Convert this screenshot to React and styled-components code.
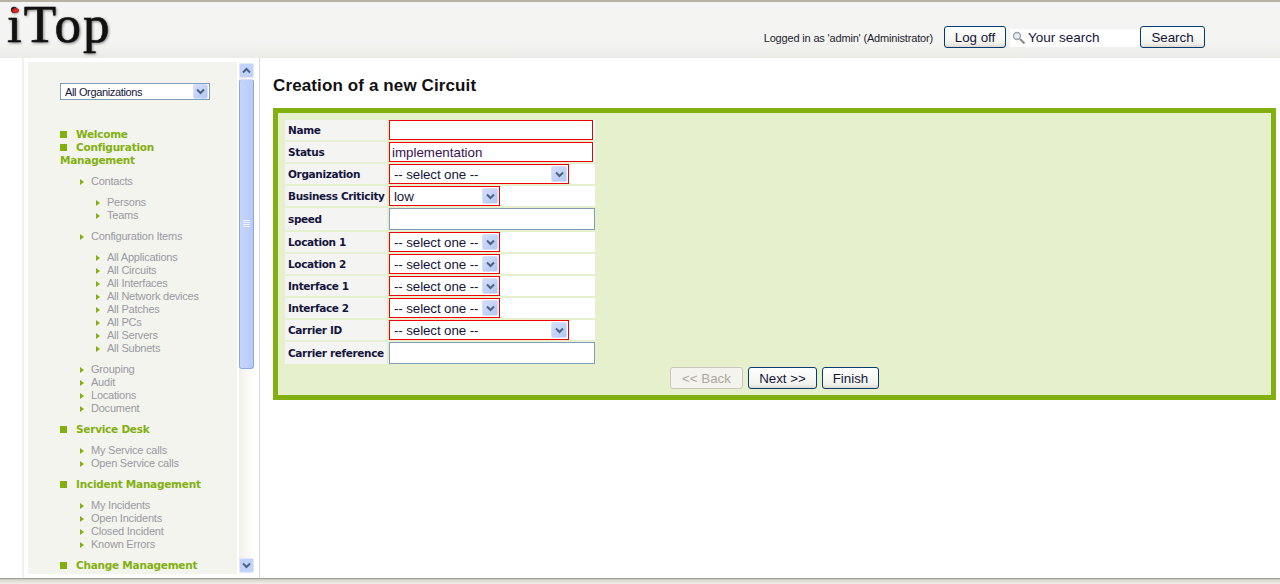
import React from "react";
import styled, { createGlobalStyle } from "styled-components";

const GlobalStyle = createGlobalStyle`
  html, body {
    margin: 0;
    padding: 0;
    background: #fff;
    overflow: hidden;
  }
  * {
    box-sizing: border-box;
  }
`;

const green = "#83b011";

const Page = styled.div`
  width: 1280px;
  height: 584px;
  display: flex;
  flex-direction: column;
  overflow: hidden;
  font-family: "Liberation Sans", Arial, sans-serif;
`;

const Header = styled.header`
  height: 58px;
  flex: none;
  display: flex;
  justify-content: space-between;
  border-top: 2px solid #b8b2a4;
  background: linear-gradient(#f4f4f2 0, #f4f4f2 70%, #ebebe8 100%);
`;

const Logo = styled.div`
  position: relative;
  margin-left: 7px;
  font-family: "Liberation Serif", serif;
  font-size: 53px;
  line-height: 44px;
  letter-spacing: 2px;
  color: #111;
  -webkit-text-stroke: 0.6px #111;
  text-shadow: 1px 1px 3px rgba(0, 0, 0, 0.6);
`;

const LogoDot = styled.span`
  position: absolute;
  left: 5px;
  top: 6px;
  width: 7px;
  height: 5px;
  border-radius: 50%;
  background: radial-gradient(#f03030, #b01010);
`;

const UserBar = styled.div`
  display: flex;
  align-items: flex-start;
  padding: 24px 75px 0 0;
`;

const LoggedIn = styled.span`
  margin: 5px 11px 0 0;
  font-size: 11px;
  line-height: 14px;
  letter-spacing: -0.17px;
  color: #1c1c30;
`;

const Button = styled.button`
  height: 22px;
  width: ${(p) => p.$w}px;
  padding: 1px 0 0;
  border: 1px solid ${(p) => (p.disabled ? "#c9c7ba" : "#003c74")};
  border-radius: 3px;
  background: ${(p) =>
    p.disabled ? "#f4f3ee" : "linear-gradient(#ffffff, #f3f3ee 80%, #dcd9cf)"};
  color: ${(p) => (p.disabled ? "#aca899" : "#14143c")};
  font-family: "Liberation Sans", Arial, sans-serif;
  font-size: 13.33px;
  line-height: 20px;
`;

const SearchBox = styled.div`
  display: flex;
  align-items: center;
  width: 130px;
  height: 18px;
  margin: 3px 0 0 4px;
  padding: 0 0 1px 2px;
  background: #fff;
  font-size: 13.5px;
  color: #14143c;
`;

const SearchIcon = styled.svg`
  width: 14px;
  height: 14px;
  margin-right: 2px;
  flex: none;
`;

const Body = styled.div`
  flex: 1;
  min-height: 0;
  display: flex;
`;

const SideShell = styled.aside`
  width: 238px;
  margin-left: 22px;
  flex: none;
  display: flex;
  padding: 4px 5px 4px 4px;
  border-left: 2px solid #f0f0ee;
  border-right: 1px solid #dddddb;
`;

const SidePanel = styled.nav`
  width: 209px;
  flex: none;
  overflow: hidden;
  background: #f3f4ee;
  padding: 21px 20px 0 32px;
`;

const OrgSelect = styled.div`
  display: flex;
  align-items: center;
  justify-content: space-between;
  width: 150px;
  height: 17px;
  margin-bottom: 28px;
  padding: 0 1px 0 4px;
  border: 1px solid #7f9db9;
  background: #fff;
  font-size: 11px;
  letter-spacing: -0.35px;
  color: #14143c;
`;

const Menu = styled.ul`
  list-style: none;
  margin: 0;
  padding: 0;
`;

const MenuHead = styled.li`
  margin-bottom: ${(p) => (p.$last ? 0 : 8)}px;
  font-family: "DejaVu Sans", Verdana, sans-serif;
  font-weight: bold;
  font-size: 10.5px;
  line-height: 13px;
  letter-spacing: -0.24px;
  color: ${green};
  &::before {
    content: "";
    display: inline-block;
    width: 7px;
    height: 7px;
    margin: 0 9px 0 0;
    background: ${green};
  }
`;

const SubMenu = styled.ul`
  list-style: none;
  margin: 8px 0 0;
  padding: 0 0 0 ${(p) => p.$indent}px;
`;

const SubItem = styled.li`
  display: flex;
  flex-wrap: wrap;
  align-items: center;
  font-family: "Liberation Sans", Arial, sans-serif;
  font-weight: normal;
  font-size: 11px;
  line-height: 13px;
  letter-spacing: -0.22px;
  color: #9a9aa2;
  & > ul {
    width: 100%;
    margin-bottom: 8px;
  }
`;

const Arrow = styled.span`
  width: 0;
  height: 0;
  margin-right: 7px;
  border-left: 4px solid ${green};
  border-top: 3.5px solid transparent;
  border-bottom: 3.5px solid transparent;
`;

const Scrollbar = styled.div`
  width: 15px;
  margin: 1px 0 1px 2px;
  flex: none;
  display: flex;
  flex-direction: column;
  background: linear-gradient(90deg, #f3f1ec, #fefefb);
`;

const ScrollBtn = styled.div`
  height: 15px;
  flex: none;
  display: flex;
  align-items: center;
  justify-content: center;
  border: 1px solid #dfe7f8;
  border-radius: 2px;
  background: #c1d3fb;
`;

const Thumb = styled.div`
  height: 290px;
  margin-top: 1px;
  flex: none;
  display: flex;
  align-items: center;
  justify-content: center;
  border: 1px solid #8fa6d8;
  border-top-color: #d6e0f7;
  border-radius: 3px;
  background: linear-gradient(90deg, #c5d5fb, #b6cbf7);
`;

const Grip = styled.svg`
  width: 7px;
  height: 8px;
`;

const ScrollTrack = styled.div`
  flex: 1;
`;

const Main = styled.main`
  flex: 1;
  min-width: 0;
  padding: 18px 4px 0 13px;
`;

const Title = styled.h1`
  margin: 0 0 12px;
  font-family: "Liberation Sans", Arial, sans-serif;
  font-size: 17px;
  line-height: 20px;
  letter-spacing: 0.12px;
  font-weight: bold;
  color: #111;
`;

const Wizard = styled.div`
  border: 5px solid ${green};
  background: #e6f0cc;
  padding: 5px 5px 6px;
`;

const Table = styled.table`
  border-collapse: separate;
  border-spacing: 2px;
`;

const Label = styled.td`
  width: 102px;
  min-width: 102px;
  max-width: 102px;
  padding: 0 0 0 3px;
  background: #f4f4f2;
  font-family: "DejaVu Sans", Verdana, sans-serif;
  font-weight: bold;
  font-size: 10.5px;
  letter-spacing: -0.35px;
  color: #14143c;
  white-space: nowrap;
`;

const Value = styled.td`
  width: 206px;
  padding: 0;
  background: #fff;
  line-height: 0;
`;

const TextBox = styled.input`
  display: block;
  width: ${(p) => p.$w}px;
  height: ${(p) => p.$h}px;
  padding: 0 2px;
  border: 1px solid ${(p) => (p.$required ? "#f00000" : "#7f9db9")};
  outline: none;
  background: #fff;
  font-family: "Liberation Sans", Arial, sans-serif;
  font-size: 13.33px;
  color: #3a1050;
`;

const SelectBox = styled.div`
  display: flex;
  align-items: center;
  justify-content: space-between;
  width: ${(p) => p.$w}px;
  height: 20px;
  padding: 0 1px 0 4px;
  border: 1px solid #f00000;
  background: #fff;
  font-size: 13.33px;
  line-height: 18px;
  letter-spacing: -0.1px;
  color: #14143c;
`;

const SelectText = styled.span`
  padding-top: 1px;
`;

const DropBtn = styled.span`
  width: ${(p) => p.$size}px;
  height: ${(p) => p.$size}px;
  flex: none;
  display: flex;
  align-items: center;
  justify-content: center;
  border-radius: 2px;
  border: 1px solid #d6e0f7;
  background: linear-gradient(135deg, #d4defa, #b3c7f2);
`;

const Actions = styled.div`
  display: flex;
  justify-content: center;
  gap: 5px;
  margin-top: 1px;
`;

const Footer = styled.footer`
  height: 6px;
  flex: none;
  background: linear-gradient(#8a8a80, #d8d8d0 30%, #f0f0e6);
`;

const Chevron = ({ up, size = 9 }) => (
  <svg width={size} height={size - 2} viewBox="0 0 9 7">
    <path
      d={up ? "M1 5.5 4.5 2 8 5.5" : "M1 1.5 4.5 5 8 1.5"}
      fill="none"
      stroke="#4d6185"
      strokeWidth="2"
    />
  </svg>
);

const Select = ({ w, children }) => (
  <SelectBox $w={w}>
    <SelectText>{children}</SelectText>
    <DropBtn $size={16}>
      <Chevron />
    </DropBtn>
  </SelectBox>
);

const menu = [
  { title: "Welcome", gapless: true },
  {
    title: "Configuration Management",
    items: [
      { name: "Contacts", sub: ["Persons", "Teams"] },
      {
        name: "Configuration Items",
        sub: [
          "All Applications",
          "All Circuits",
          "All Interfaces",
          "All Network devices",
          "All Patches",
          "All PCs",
          "All Servers",
          "All Subnets",
        ],
      },
      { name: "Grouping" },
      { name: "Audit" },
      { name: "Locations" },
      { name: "Document" },
    ],
  },
  {
    title: "Service Desk",
    items: [{ name: "My Service calls" }, { name: "Open Service calls" }],
  },
  {
    title: "Incident Management",
    items: [
      { name: "My Incidents" },
      { name: "Open Incidents" },
      { name: "Closed Incident" },
      { name: "Known Errors" },
    ],
  },
  { title: "Change Management" },
];

const fields = [
  { label: "Name", type: "text", w: 204, h: 20, required: true },
  { label: "Status", type: "text", w: 204, h: 20, required: true, value: "implementation" },
  { label: "Organization", type: "select", w: 180 },
  { label: "Business Criticity", type: "select", w: 111, value: "low" },
  { label: "speed", type: "text", w: 206, h: 22 },
  { label: "Location 1", type: "select", w: 111 },
  { label: "Location 2", type: "select", w: 111 },
  { label: "Interface 1", type: "select", w: 111 },
  { label: "Interface 2", type: "select", w: 111 },
  { label: "Carrier ID", type: "select", w: 180 },
  { label: "Carrier reference", type: "text", w: 206, h: 22 },
];

const App = () => {
  return (
    <Page>
      <GlobalStyle />
      <Header>
        <Logo>
          iTop
          <LogoDot />
        </Logo>
        <UserBar>
          <LoggedIn>Logged in as 'admin' (Administrator)</LoggedIn>
          <Button $w={62}>Log off</Button>
          <SearchBox>
            <SearchIcon viewBox="0 0 14 14">
              <circle cx="5" cy="5" r="3.5" fill="#e4ecf4" stroke="#9aa4ae" strokeWidth="1.4" />
              <path d="M8 8l4.5 4.5" stroke="#8a8a8a" strokeWidth="2" />
            </SearchIcon>
            Your search
          </SearchBox>
          <Button $w={65}>Search</Button>
        </UserBar>
      </Header>
      <Body>
        <SideShell>
          <SidePanel>
            <OrgSelect>
              All Organizations
              <DropBtn $size={15}>
                <Chevron />
              </DropBtn>
            </OrgSelect>
            <Menu>
              {menu.map((m) => (
                <MenuHead key={m.title} $last={m.gapless}>
                  {m.title}
                  {m.items && (
                    <SubMenu $indent={20}>
                      {m.items.map((item) => (
                        <SubItem key={item.name}>
                          <Arrow />
                          {item.name}
                          {item.sub && (
                            <SubMenu $indent={16}>
                              {item.sub.map((s) => (
                                <SubItem key={s}>
                                  <Arrow />
                                  {s}
                                </SubItem>
                              ))}
                            </SubMenu>
                          )}
                        </SubItem>
                      ))}
                    </SubMenu>
                  )}
                </MenuHead>
              ))}
            </Menu>
          </SidePanel>
          <Scrollbar>
            <ScrollBtn>
              <Chevron up />
            </ScrollBtn>
            <Thumb>
              <Grip viewBox="0 0 7 8">
                <path d="M0 .5h7M0 2.5h7M0 4.5h7M0 6.5h7" stroke="#eef3fe" strokeWidth="1" />
              </Grip>
            </Thumb>
            <ScrollTrack />
            <ScrollBtn>
              <Chevron />
            </ScrollBtn>
          </Scrollbar>
        </SideShell>
        <Main>
          <Title>Creation of a new Circuit</Title>
          <Wizard>
            <Table>
              <tbody>
                {fields.map((f) => (
                  <tr key={f.label}>
                    <Label>{f.label}</Label>
                    <Value>
                      {f.type === "text" ? (
                        <TextBox
                          $w={f.w}
                          $h={f.h}
                          $required={f.required}
                          defaultValue={f.value || ""}
                        />
                      ) : (
                        <Select w={f.w}>{f.value || "-- select one --"}</Select>
                      )}
                    </Value>
                  </tr>
                ))}
              </tbody>
            </Table>
            <Actions>
              <Button $w={73} disabled>
                {"<< Back"}
              </Button>
              <Button $w={69}>{"Next >>"}</Button>
              <Button $w={57}>Finish</Button>
            </Actions>
          </Wizard>
        </Main>
      </Body>
      <Footer />
    </Page>
  );
};

export default App;
